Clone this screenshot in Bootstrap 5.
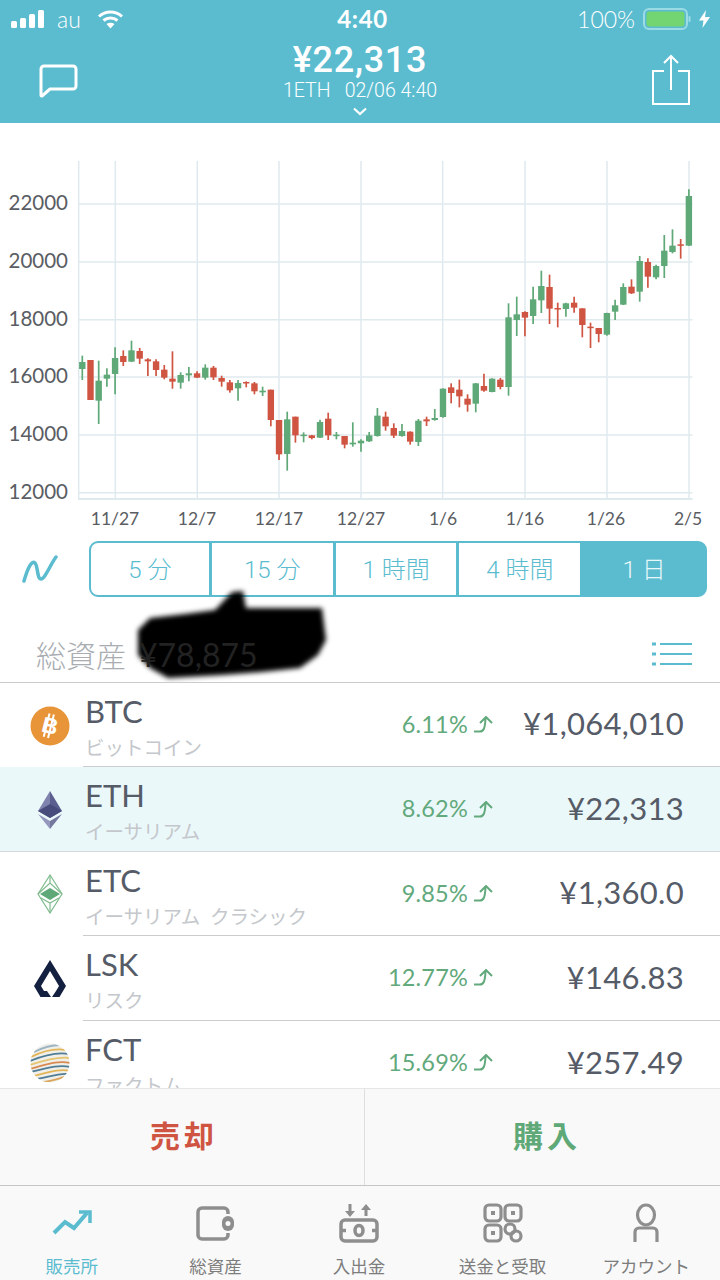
<!DOCTYPE html>
<html lang="ja">
<head>
<meta charset="UTF-8">
<title>販売所</title>
<link href="https://cdn.jsdelivr.net/npm/bootstrap@5.3.0/dist/css/bootstrap.min.css" rel="stylesheet">
<style>
    body { width: 720px; height: 1280px; overflow: hidden; font-family: Lato, "Noto Sans CJK JP", sans-serif; color: #555b67; background: #fff; }
    .top-head { height: 123px; background: #5bbcd0; color: #fff; flex: none; position: relative; }
    .status-line { height: 38px; padding: 0 10px 0 11px; font-size: 23px; line-height: 38px; }
    .status-side { width: 260px; }
    .status-time { font-size: 24px; font-weight: 700; letter-spacing: .6px; padding-left: 4px; }
    .head-line { height: 85px; padding: 0 30px; }
    .head-side { flex: 1 1 0; }
    .head-price { font-family: Roboto, sans-serif; font-size: 36px; line-height: 38px; font-weight: 500; letter-spacing: .7px; padding-top: 3px; }
    .head-sub { font-family: Roboto, sans-serif; font-size: 19.5px; line-height: 22px; font-weight: 300; white-space: pre; margin-top: 1px; }
    .head-chev { display: block; margin: 5px auto 0; }
    .chart-svg { display: block; flex: none; }
    .chart-svg text { fill: #5a5d63; font-family: Lato, sans-serif; }
    .range-line { height: 67px; padding: 11px 13px 0 22px; flex: none; }
    .range-group { width: 618px; height: 56px; margin-left: 31px; }
    .range-group .btn { font-family: Roboto, "Noto Sans CJK JP", sans-serif; font-weight: 300; font-size: 24px; color: #5bbcd0; border: 2px solid #5bbcd0; background: #fff; padding: 0; line-height: 54px; border-radius: 9px; }
    .range-group .btn.on { background: #5bbcd0; color: #e8f7fa; }
    .total-line { height: 85px; padding: 0 28px 0 36px; flex: none; position: relative; }
    .total-label { font-size: 30px; line-height: 36px; color: #a9adb2; font-weight: 300; margin-bottom: 9px; position: relative; z-index: 2; }
    .total-value { font-size: 32px; color: #222; margin-left: 13px; font-weight: 400; }
    .scribble { position: absolute; left: 0; top: -67px; z-index: 1; }
    .coin-list { flex: 1 1 0; overflow: hidden; border-top: 1px solid #ccc; border-radius: 0; }
    .coin-row { display: flex; padding: 0; height: 84.4px; border: 0; flex: none; background: transparent; color: inherit; }
    .coin-row.sel { background: #ebf8fa; border-bottom: 1px solid #d4d8da; }
    .coin-icon { width: 83px; flex: none; display: flex; align-items: center; justify-content: center; padding-left: 17px; padding-top: 1px; }
    .coin-body { flex: 1 1 0; display: flex; align-items: center; border-bottom: 1px solid #ccc; padding-right: 36px; min-width: 0; }
    .coin-row.sel .coin-body { border-bottom: 0; }
    .coin-row:last-child .coin-body { border-bottom: 0; }
    .coin-name { flex: 1 1 0; align-self: flex-start; padding: 9px 0 0 2px; }
    .coin-sym { font-size: 31px; line-height: 38px; }
    .coin-jp { font-size: 19.5px; line-height: 26px; color: #c4c7cb; margin-top: 5px; white-space: nowrap; }
    .coin-pct { font-size: 23.5px; color: #62a97c; letter-spacing: .2px; }
    .coin-arrow { margin: 0 0 0 6px; flex: none; }
    .coin-price { width: 191px; text-align: right; font-size: 31px; letter-spacing: .3px; margin-top: -2px; }
    .action-bar { height: 98px; background: #f9f9f9; border-top: 1px solid #e6e6e6; border-bottom: 1px solid #c6c6c6; flex: none; }
    .action-bar .btn { height: 96px; font-size: 30px; font-weight: 700; border: 0; border-radius: 0; padding: 0 0 6px; font-family: "Noto Sans CJK JP", sans-serif; letter-spacing: 4px; }
    .act-sell { color: #cf5442; border-right: 1px solid #dedede !important; width: 365px; padding-left: 4px !important; }
    .act-buy { color: #5fa877; flex: 1 1 0; padding-left: 9px !important; }
    .tab-bar { height: 94px; background: #f9f9f9; flex: none; padding-right: 2px; }
    .tab-bar .nav-link { padding: 17px 0 0; color: #7d7d7d; font-size: 17.5px; line-height: 24px; height: 94px; font-family: "Noto Sans CJK JP", sans-serif; }
    .tab-bar .nav-link.active { color: #5bbcd0; }
    .tab-ico { display: block; margin: 0 auto 11px; }
</style>
</head>
<body class="d-flex flex-column">

<header class="top-head">
    <div class="status-line d-flex justify-content-between align-items-center">
        <div class="status-side d-flex align-items-center">
            <svg width="34" height="18" viewBox="0 0 34 18" fill="#fff"><rect x="0" y="11" width="6" height="7" rx="1.500"/><rect x="9" y="8" width="6" height="10" rx="1.500"/><rect x="18" y="4" width="6" height="14" rx="1.500"/><rect x="27" y="0" width="6" height="18" rx="1.500"/></svg>
            <span class="ms-2 ps-1 fw-light">au</span>
            <svg class="ms-3" width="27" height="20" viewBox="0 0 27 20" fill="none" stroke="#fff" stroke-width="3"><path d="M2 7.500c6.500-6 16.500-6 23 0"/><path d="M6.500 11.500c4-3.500 10-3.500 14 0"/><path d="M13.500 19.500l-4-4.500c2.400-1.800 5.600-1.800 8 0z" fill="#fff" stroke="none"/></svg>
        </div>
        <div class="status-time">4:40</div>
        <div class="status-side d-flex align-items-center justify-content-end">
            <span class="fw-light">100%</span>
            <svg class="ms-2" width="48" height="24" viewBox="0 0 48 24"><rect x="1" y="2" width="43" height="20" rx="5" fill="none" stroke="#9adbe6" stroke-width="2"/><rect x="3.500" y="4.500" width="38" height="15" rx="3" fill="#72d572"/><rect x="45.500" y="9" width="2" height="6" rx="1" fill="#9adbe6"/></svg>
            <svg class="ms-2" width="11" height="18" viewBox="0 0 11 18" fill="#fff"><path d="M7 0L0 10.500h4.500L3.500 18 11 7H6z"/></svg>
        </div>
    </div>
    <div class="head-line d-flex">
        <div class="head-side">
            <svg class="mt-4 ms-2" width="41" height="37" viewBox="0 0 41 37" fill="none" stroke="#fff" stroke-width="3" stroke-linejoin="round"><path d="M6 4h29a3 3 0 0 1 3 3v17a3 3 0 0 1-3 3H12l-8 7a1 1 0 0 1-1-1V7a3 3 0 0 1 3-3z"/></svg>
        </div>
        <div class="text-center">
            <div class="head-price">¥22,313</div>
            <div class="head-sub">1ETH   02/06 4:40</div>
            <svg class="head-chev" width="16" height="9" viewBox="0 0 16 9" fill="none" stroke="#fff" stroke-width="2.200"><path d="M2 1.500l6 5.500 6-5.500"/></svg>
        </div>
        <div class="head-side d-flex justify-content-end">
            <svg class="mt-3" width="38" height="52" viewBox="0 0 38 52" fill="none" stroke="#fff" stroke-width="2"><path d="M12 17H1v33h36V17H26"/><path d="M19 36V2M12 9l7-7 7 7"/></svg>
        </div>
    </div>
</header>

<svg class="chart-svg" id="chart" width="720" height="407" viewBox="0 123 720 407"></svg>

<div class="range-line d-flex align-items-center">
    <svg width="36" height="28" viewBox="0 0 36 28" fill="none" stroke="#5bbcd0" stroke-width="3.500" stroke-linecap="round"><path d="M2 26C6 12 10 5 13 8s2 16 6 16S28 10 34 2"/></svg>
    <div class="btn-group range-group" role="group">
        <button class="btn" style="flex:121">5 分</button>
        <button class="btn" style="flex:124">15 分</button>
        <button class="btn" style="flex:124">1 時間</button>
        <button class="btn" style="flex:124">4 時間</button>
        <button class="btn on" style="flex:125">1 日</button>
    </div>
</div>

<div class="total-line d-flex justify-content-between align-items-end">
    <svg class="scribble" width="720" height="152" viewBox="0 530 720 152"><defs><filter id="smudge" x="-10%" y="-10%" width="120%" height="120%"><feGaussianBlur stdDeviation="2.500"/></filter></defs><path d="M138 630L150 618L185 614L215 610L232 592L243 591L246 608L322 608L326 640L318 655L300 668L262 672L222 675L168 678L150 668L138 655Z" fill="#050505" filter="url(#smudge)"/></svg>
    <div class="total-label">総資産<span class="total-value">¥78,875</span></div>
    <svg class="mb-3" width="40" height="24" viewBox="0 0 40 24" stroke="#5bbcd0" stroke-width="2"><path d="M0 2h4M0 12h4M0 22h4" stroke-width="3"/><path d="M8 2h32M8 12h32M8 22h32"/></svg>
</div>

<ul class="list-group coin-list">
    <li class="list-group-item coin-row">
        <div class="coin-icon"><svg width="40" height="40" viewBox="0 0 40 40"><circle cx="20" cy="20" r="19.500" fill="#e8953a"/><g transform="rotate(14 20 20)" fill="#fff"><text x="20" y="27.500" font-size="22" font-weight="700" text-anchor="middle" font-family="Liberation Sans">B</text><rect x="15.500" y="8" width="2" height="24"/><rect x="20" y="8" width="2" height="24"/></g></svg></div>
        <div class="coin-body">
            <div class="coin-name"><div class="coin-sym">BTC</div><div class="coin-jp">ビットコイン</div></div>
            <div class="coin-pct">6.11%</div>
            <svg class="coin-arrow" width="19" height="17" viewBox="0 0 19 17" fill="none" stroke="#62a97c" stroke-width="2"><path d="M0 15.500h6c3.500 0 5-3 5.500-13M6 7l6-6 6 6"/></svg>
            <div class="coin-price">¥1,064,010</div>
        </div>
    </li>
    <li class="list-group-item coin-row sel">
        <div class="coin-icon"><svg width="26" height="40" viewBox="0 0 26 40"><polygon points="13,1 1,21 13,28" fill="#7e82ad"/><polygon points="13,1 25,21 13,28" fill="#5a5f8f"/><polygon points="13,14 1,21 13,28 25,21" fill="#474c7c"/><polygon points="1,24 13,39 13,31" fill="#9597bd"/><polygon points="25,24 13,39 13,31" fill="#74789f"/></svg></div>
        <div class="coin-body">
            <div class="coin-name"><div class="coin-sym">ETH</div><div class="coin-jp">イーサリアム</div></div>
            <div class="coin-pct">8.62%</div>
            <svg class="coin-arrow" width="19" height="17" viewBox="0 0 19 17" fill="none" stroke="#62a97c" stroke-width="2"><path d="M0 15.500h6c3.500 0 5-3 5.500-13M6 7l6-6 6 6"/></svg>
            <div class="coin-price">¥22,313</div>
        </div>
    </li>
    <li class="list-group-item coin-row">
        <div class="coin-icon"><svg width="26" height="40" viewBox="0 0 26 40" fill="none" stroke="#7fbb8c" stroke-width="1.200"><polygon points="13,1 1,20 13,39 25,20"/><path d="M13 1v8M1 20L13 9l12 11M4 24l9 5 9-5M13 29v10"/><polygon points="13,14 3,20 13,26 23,20" fill="#5fa877" stroke="none"/></svg></div>
        <div class="coin-body">
            <div class="coin-name"><div class="coin-sym">ETC</div><div class="coin-jp">イーサリアム&ensp;クラシック</div></div>
            <div class="coin-pct">9.85%</div>
            <svg class="coin-arrow" width="19" height="17" viewBox="0 0 19 17" fill="none" stroke="#62a97c" stroke-width="2"><path d="M0 15.500h6c3.500 0 5-3 5.500-13M6 7l6-6 6 6"/></svg>
            <div class="coin-price">¥1,360.0</div>
        </div>
    </li>
    <li class="list-group-item coin-row">
        <div class="coin-icon"><svg width="32" height="38" viewBox="0 0 32 38" fill="#14203f"><path d="M16 11L7 26l3 5h3l4 6H6.500L0 26 16 0z"/><path d="M16 0l16 26-6.500 11H18l4-6 3-5-9-15z"/></svg></div>
        <div class="coin-body">
            <div class="coin-name"><div class="coin-sym">LSK</div><div class="coin-jp">リスク</div></div>
            <div class="coin-pct">12.77%</div>
            <svg class="coin-arrow" width="19" height="17" viewBox="0 0 19 17" fill="none" stroke="#62a97c" stroke-width="2"><path d="M0 15.500h6c3.500 0 5-3 5.500-13M6 7l6-6 6 6"/></svg>
            <div class="coin-price">¥146.83</div>
        </div>
    </li>
    <li class="list-group-item coin-row">
        <div class="coin-icon"><svg width="40" height="40" viewBox="0 0 40 40" fill="none" stroke-width="1.800"><defs><clipPath id="globe"><circle cx="20" cy="20" r="19.500"/></clipPath></defs><circle cx="20" cy="20" r="19.500" fill="#f0efe9"/><g clip-path="url(#globe)"><path d="M4 9C12 5 20 2 30 2" stroke="#9db4c2"/><path d="M1 14C11 9 24 5 36 7" stroke="#e3b658"/><path d="M0 18C12 13 28 9 39 11" stroke="#4f7d96"/><path d="M0 22C12 18 28 13 40 15" stroke="#e6c46e"/><path d="M0 26C14 22 28 17 40 20" stroke="#d98a52"/><path d="M1 29C14 26 28 21 40 24" stroke="#4f7d96"/><path d="M3 33C16 30 30 25 40 28" stroke="#e3b658"/><path d="M7 36C18 34 30 30 38 31" stroke="#4f7d96"/><path d="M13 39C22 38 30 35 35 34" stroke="#d9a55a"/></g></svg></div>
        <div class="coin-body">
            <div class="coin-name"><div class="coin-sym">FCT</div><div class="coin-jp">ファクトム</div></div>
            <div class="coin-pct">15.69%</div>
            <svg class="coin-arrow" width="19" height="17" viewBox="0 0 19 17" fill="none" stroke="#62a97c" stroke-width="2"><path d="M0 15.500h6c3.500 0 5-3 5.500-13M6 7l6-6 6 6"/></svg>
            <div class="coin-price">¥257.49</div>
        </div>
    </li>
</ul>

<div class="action-bar d-flex">
    <button class="btn act-sell">売却</button>
    <button class="btn act-buy">購入</button>
</div>

<nav class="nav nav-justified tab-bar">
    <a class="nav-link active" href="#"><svg class="tab-ico" width="40" height="40" viewBox="0 0 40 40" fill="none" stroke="#5bbcd0" stroke-width="4"><path d="M2 30l11-11 9 6 13-15"/><path d="M27 9h11v11" stroke-width="3.500"/></svg>販売所</a>
    <a class="nav-link" href="#"><svg class="tab-ico" width="40" height="40" viewBox="0 0 40 40" fill="none" stroke="#8e8e8e" stroke-width="3.500"><path d="M33 11V9a4 4 0 0 0-4-4H7a4 4 0 0 0-4 4v23a4 4 0 0 0 4 4h22a4 4 0 0 0 4-4v-2"/><rect x="27" y="13" width="12" height="15" rx="6" fill="#8e8e8e" stroke="none"/><circle cx="33" cy="20.500" r="2.500" fill="#f9f9f9" stroke="none"/></svg>総資産</a>
    <a class="nav-link" href="#"><svg class="tab-ico" width="40" height="40" viewBox="0 0 40 40" fill="none" stroke="#8e8e8e" stroke-width="3.500"><rect x="2" y="17" width="36" height="21" rx="4"/><ellipse cx="20" cy="27.500" rx="4" ry="5"/><path d="M2 27.500h5M33 27.500h5"/><path d="M11 1v9M27 13V5" stroke-width="3"/><path d="M6 8l5 6 5-6zM22 7l5-6 5 6z" fill="#8e8e8e" stroke="none"/></svg>入出金</a>
    <a class="nav-link" href="#"><svg class="tab-ico" width="40" height="40" viewBox="0 0 40 40" fill="none" stroke="#8e8e8e" stroke-width="3.200"><rect x="2" y="2" width="16" height="16" rx="4"/><rect x="22" y="2" width="16" height="16" rx="4"/><rect x="2" y="22" width="16" height="16" rx="4"/><circle cx="27" cy="26" r="5"/><circle cx="33" cy="33" r="5"/><path d="M10 8v4M30 8v4M10 28v4" stroke-width="4"/></svg>送金と受取</a>
    <a class="nav-link" href="#"><svg class="tab-ico" width="40" height="40" viewBox="0 0 40 40" fill="none" stroke="#8e8e8e" stroke-width="3.200"><ellipse cx="20" cy="12" rx="8.500" ry="10"/><path d="M9 39V29a4 4 0 0 1 4-4h14a4 4 0 0 1 4 4v10"/></svg>アカウント</a>
</nav>

<script>
    // [wick top, wick bottom, body top, body bottom, up?] measured off the reference at 3x
    const candles = [
        [617,690,636,657,1],[630,750,630,750,0],[632,822,692,752,1],[655,710,674,686,1],[592,733,624,672,1],
        [601,648,618,636,0],[572,636,601,635,1],[594,642,603,626,0],[625,678,628,634,0],[628,678,634,660,0],
        [645,688,659,683,0],[604,716,686,695,0],[667,716,675,698,1],[651,694,670,676,1],[664,684,670,683,0],
        [643,689,653,683,1],[648,690,653,682,0],[677,710,684,695,0],[690,728,697,721,0],[690,752,699,715,1],
        [694,712,696,700,0],[696,733,700,724,0],[710,738,722,727,1],[719,829,719,810,0],[810,930,810,913,0],
        [785,962,808,912,1],[800,878,800,856,0],[847,877,854,858,1],[855,868,856,864,0],[809,864,816,863,1],
        [788,870,806,856,0],[846,868,854,858,1],[858,895,858,884,0],[817,890,878,883,1],[868,905,872,880,1],
        [846,876,856,874,1],[774,860,797,858,1],[785,842,800,829,0],[820,864,834,857,0],[822,860,843,858,1],
        [844,884,845,875,0],[807,888,812,876,1],[800,828,808,814,0],[777,812,804,810,1],[715,803,716,801,1],
        [700,760,712,729,0],[689,772,719,739,0],[733,785,746,764,0],[699,787,700,761,1],[671,725,708,722,0],
        [685,727,686,726,1],[684,718,689,711,0],[460,737,502,711,1],[440,558,493,510,1],[484,559,486,503,0],
        [410,522,448,498,1],[362,489,408,451,1],[374,522,411,476,0],[458,532,474,478,0],[458,500,460,477,1],
        [440,488,458,473,0],[475,562,475,525,0],[518,594,530,534,0],[534,577,534,552,0],[488,557,489,554,1],
        [449,510,466,485,1],[400,465,411,464,1],[388,432,410,430,0],[318,455,333,425,1],[325,413,336,380,0],
        [344,388,348,382,1],[255,384,302,348,1],[238,310,287,306,1],[267,326,283,286,0],[118,288,138,287,1]
    ];
    let s = "";
    const gridColor = "#dfeaef";
    [204, 262, 319.7, 377, 435, 492.7].forEach(y => {
        s += `<line x1="79" x2="692.500" y1="${y}" y2="${y}" stroke="${gridColor}" stroke-width="1.500"/>`;
    });
    [78.700, 115.300, 197.300, 279, 361, 442.700, 525, 607, 689].forEach(x => {
        s += `<line x1="${x}" x2="${x}" y1="161" y2="499" stroke="${gridColor}" stroke-width="1.500"/>`;
    });
    s += `<line x1="78" x2="692.500" y1="499" y2="499" stroke="${gridColor}" stroke-width="2"/>`;
    [[22000,204],[20000,262],[18000,319.7],[16000,377],[14000,435],[12000,492.7]].forEach(l => {
        s += `<text x="68" y="${l[1] + 6}" font-size="20.500" text-anchor="end">${l[0]}</text>`;
    });
    [["11/27",115],["12/7",197],["12/17",279],["12/27",361],["1/6",443],["1/16",525],["1/26",606],["2/5",688]].forEach(l => {
        s += `<text x="${l[1]}" y="525" font-size="17.500" text-anchor="middle">${l[0]}</text>`;
    });
    candles.forEach((c, i) => {
        const x = 82.300 + i * 8.197;
        const col = c[4] ? "#5fa877" : "#cf5442";
        s += `<line x1="${x}" x2="${x}" y1="${150 + c[0] / 3}" y2="${150 + c[1] / 3}" stroke="${col}" stroke-width="1.700"/>`;
        s += `<rect x="${x - 3.200}" y="${150 + c[2] / 3}" width="6.400" height="${Math.max((c[3] - c[2]) / 3, 1.500)}" fill="${col}"/>`;
    });
    document.getElementById("chart").innerHTML = s;
</script>
<script src="https://cdn.jsdelivr.net/npm/bootstrap@5.3.0/dist/js/bootstrap.bundle.min.js"></script>
</body>
</html>
